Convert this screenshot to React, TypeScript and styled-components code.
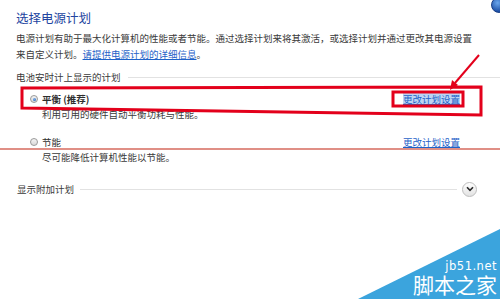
import styled, { createGlobalStyle } from 'styled-components';

const GlobalStyle = createGlobalStyle`
  html, body {
    margin: 0;
    padding: 0;
    background: #ffffff;
  }
  body {
    width: 500px;
    height: 299px;
    overflow: hidden;
    font-family: "Noto Sans CJK SC", "Noto Sans", sans-serif;
  }
`;

const Page = styled.div`
  position: relative;
  width: 500px;
  height: 299px;
  overflow: hidden;
  box-sizing: border-box;
  padding: 8px 0 0 16px;
  color: #3a3a3a;
  font-size: 9.5px;
`;

const TitleRow = styled.div`
  display: flex;
  justify-content: space-between;
  height: 20px;
`;

const Title = styled.h1`
  margin: 0;
  font-size: 12.5px;
  line-height: 20px;
  font-weight: 400;
  color: #2244a0;
`;

const HelpIcon = styled.div`
  width: 14px;
  height: 14px;
  margin-top: -11px;
  margin-right: -7px;
  border-radius: 50%;
  background: radial-gradient(circle at 40% 35%, #6aa6ec, #1d4fa6 70%);
  border: 1px solid #1a3f86;
`;

const Description = styled.p`
  margin: 2px 0 0;
  padding-right: 24px;
  line-height: 16px;
`;

const Link = styled.a<{ $selected?: boolean }>`
  color: #1f62c8;
  text-decoration: underline;
  background: ${({ $selected }) => ($selected ? '#bcd5f4' : 'transparent')};
  cursor: pointer;
`;

const SectionHeader = styled.div`
  display: flex;
  align-items: center;
  margin-top: 7px;
  line-height: 16px;
`;

const SectionLine = styled.div`
  flex: 1;
  height: 1px;
  margin-left: 7px;
  background: #e2e2e2;
`;

const PlanList = styled.div`
  display: flex;
  flex-direction: column;
  padding: 0 40px 0 14px;
`;

const Plan = styled.div<{ $first?: boolean }>`
  margin-top: ${({ $first }) => ($first ? '6px' : '13px')};
`;

const PlanHead = styled.div`
  display: flex;
  align-items: center;
  line-height: 16px;
`;

const Radio = styled.span<{ $checked?: boolean }>`
  position: relative;
  width: 8px;
  height: 8px;
  margin-right: 4px;
  border-radius: 50%;
  border: 1px solid #9a9a9a;
  box-sizing: border-box;
  background: linear-gradient(#f4f4f4, #d9d9d9);

  &::after {
    content: '';
    position: absolute;
    inset: 1.5px;
    border-radius: 50%;
    background: ${({ $checked }) => ($checked ? 'radial-gradient(circle at 40% 35%, #7fb4ee, #1c5bb8)' : 'transparent')};
  }
`;

const PlanName = styled.span<{ $bold?: boolean }>`
  flex: 1;
  font-weight: ${({ $bold }) => ($bold ? 700 : 400)};
  color: #2e2e2e;
`;

const PlanDesc = styled.div`
  padding-left: 12px;
  line-height: 14px;
`;

const ExtraRow = styled.div`
  display: flex;
  align-items: center;
  margin-top: 17px;
  padding: 0 23px 0 1px;
  line-height: 16px;
`;

const ExtraLine = styled.div`
  flex: 1;
  height: 1px;
  margin: 0 5px 0 6px;
  background: #e2e2e2;
`;

const ExpandButton = styled.div`
  display: flex;
  align-items: center;
  justify-content: center;
  width: 15px;
  height: 15px;
  border-radius: 50%;
  box-sizing: border-box;
  border: 1px solid #bdbdbd;
  background: linear-gradient(#ffffff, #e2e2e2);
`;

const Annotations = styled.svg`
  position: absolute;
  left: 0;
  top: 0;
  pointer-events: none;
`;

const Watermark = styled.div`
  position: absolute;
  right: 0;
  bottom: 0;
  width: 142px;
  height: 70px;
  pointer-events: none;
`;

const WatermarkShape = styled.svg`
  position: absolute;
  inset: 0;
`;

const WatermarkText = styled.div`
  position: absolute;
  right: 3px;
  bottom: 3px;
  display: flex;
  flex-direction: column;
  align-items: flex-end;
  color: #ffffff;
`;

const WatermarkDomain = styled.span`
  font-family: "DejaVu Sans", sans-serif;
  font-size: 11.5px;
  line-height: 13px;
  letter-spacing: 0.5px;
`;

const WatermarkName = styled.span`
  font-family: "Noto Sans CJK SC", sans-serif;
  font-size: 21px;
  line-height: 23px;
`;

export default function App() {
  return (
    <>
      <GlobalStyle />
      <Page>
        <TitleRow>
          <Title>选择电源计划</Title>
          <HelpIcon />
        </TitleRow>
        <Description>
          电源计划有助于最大化计算机的性能或者节能。通过选择计划来将其激活，或选择计划并通过更改其电源设置来自定义计划。
          <Link>请提供电源计划的详细信息</Link>。
        </Description>
        <SectionHeader>
          电池安时计上显示的计划
          <SectionLine />
        </SectionHeader>
        <PlanList>
          <Plan $first>
            <PlanHead>
              <Radio $checked />
              <PlanName $bold>平衡 (推荐)</PlanName>
              <Link $selected>更改计划设置</Link>
            </PlanHead>
            <PlanDesc>利用可用的硬件自动平衡功耗与性能。</PlanDesc>
          </Plan>
          <Plan>
            <PlanHead>
              <Radio />
              <PlanName>节能</PlanName>
              <Link>更改计划设置</Link>
            </PlanHead>
            <PlanDesc>尽可能降低计算机性能以节能。</PlanDesc>
          </Plan>
        </PlanList>
        <ExtraRow>
          显示附加计划
          <ExtraLine />
          <ExpandButton>
            <svg width="8" height="6" viewBox="0 0 8 6">
              <path d="M1 1.2 L4 4.3 L7 1.2" fill="none" stroke="#2a2a2a" strokeWidth="1.6" />
            </svg>
          </ExpandButton>
        </ExtraRow>

        <Annotations width="500" height="299" viewBox="0 0 500 299">
          <polygon points="22,88 481,87 481,115 22,108" fill="none" stroke="#e3001b" strokeWidth="3" />
          <rect x="393" y="92" width="70" height="14" fill="none" stroke="#e3001b" strokeWidth="3" />
          <line x1="479" y1="55" x2="455" y2="83" stroke="#e3001b" strokeWidth="2" />
          <polygon points="450,90 452,80 458,85" fill="#e3001b" />
          <line x1="0" y1="149" x2="500" y2="149" stroke="#d66a5e" strokeWidth="1.5" />
        </Annotations>

        <Watermark>
          <WatermarkShape width="142" height="70" viewBox="0 0 142 70">
            <polygon points="0,70 142,0 142,70" fill="#3ba4dd" />
          </WatermarkShape>
          <WatermarkText>
            <WatermarkDomain>jb51.net</WatermarkDomain>
            <WatermarkName>脚本之家</WatermarkName>
          </WatermarkText>
        </Watermark>
      </Page>
    </>
  );
}
